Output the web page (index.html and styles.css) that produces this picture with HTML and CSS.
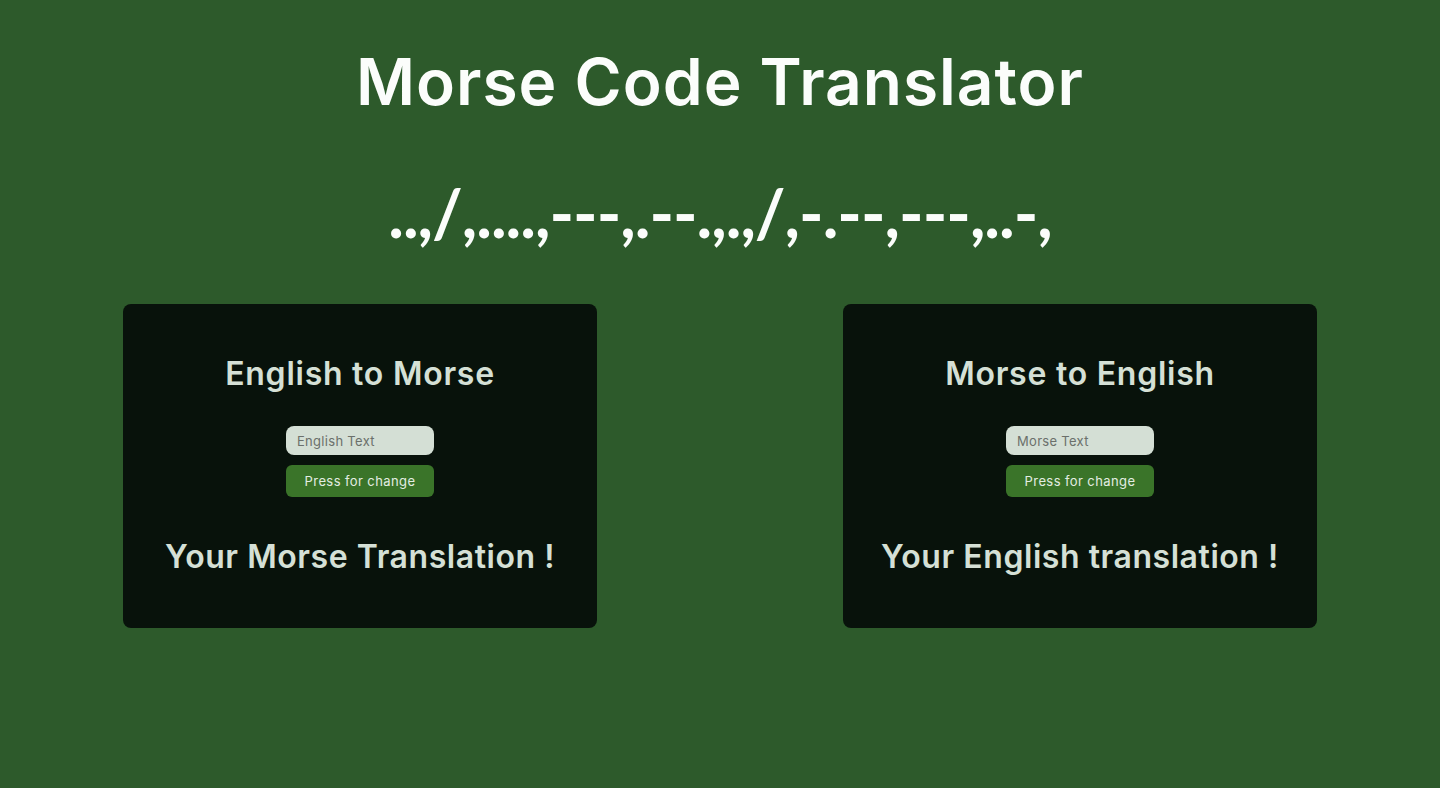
FILE: index.html
```html
<!DOCTYPE html>
<html lang="en">
<head>
<meta charset="utf-8">
<title>Morse Code Translator</title>
<link rel="stylesheet" href="styles.css">
</head>
<body>
  <header class="header">
    <h1 class="title">Morse Code Translator</h1>
    <p class="morse">..,/,....,---,.--.,.,/,-.--,---,..-,</p>
  </header>
  <main class="panels">
    <section class="card">
      <h2 class="card-title">English to Morse</h2>
      <input class="field" type="text" placeholder="English Text">
      <button class="btn" type="button">Press for change</button>
      <h2 class="result">Your Morse Translation !</h2>
    </section>
    <section class="card">
      <h2 class="card-title">Morse to English</h2>
      <input class="field" type="text" placeholder="Morse Text">
      <button class="btn" type="button">Press for change</button>
      <h2 class="result">Your English translation !</h2>
    </section>
  </main>
</body>
</html>
```
FILE: styles.css
```css
* { box-sizing: border-box; }
html, body { margin: 0; padding: 0; }
body {
  background: #2d5a2b;
  font-family: Inter, "Noto Sans", "DejaVu Sans", sans-serif;
  color: #ffffff;
  min-height: 788px;
}
.header {
  display: flex;
  flex-direction: column;
  align-items: center;
  padding-top: 43px;
}
.title {
  margin: 0;
  font-size: 64px;
  line-height: 77px;
  font-weight: 600;
  letter-spacing: 1px;
  color: #fbfdfb;
}
.morse {
  margin: 54px 0 0;
  font-family: Lato, Inter, sans-serif;
  font-size: 66px;
  line-height: 77px;
  font-weight: 700;
  letter-spacing: -1px;
  color: #fbfdfb;
}
.panels {
  display: flex;
  justify-content: space-around;
  margin-top: 53px;
}
.card {
  width: 474px;
  height: 324px;
  background: #08120b;
  border-radius: 8px;
  display: flex;
  flex-direction: column;
  align-items: center;
  padding-top: 50px;
}
.card-title, .result {
  margin: 0;
  font-size: 32px;
  line-height: 40px;
  font-weight: 600;
  color: #d5e0d6;
}
.card-title { letter-spacing: 0.75px; }
.field {
  margin-top: 32px;
  width: 148px;
  height: 29px;
  border: none;
  border-radius: 8px;
  background: #d4dfd5;
  padding: 0 11px;
  font-family: inherit;
  font-size: 13px;
  letter-spacing: 0.3px;
  color: #333;
  outline: none;
}
.field::placeholder { color: #6b706b; }
.btn {
  margin-top: 10px;
  width: 148px;
  height: 32px;
  border: none;
  border-radius: 6px;
  background: #3a7429;
  color: #e3ede2;
  font-family: inherit;
  font-size: 13px;
  letter-spacing: 0.4px;
}
.result { margin-top: 40px; letter-spacing: 0.55px; }
```
